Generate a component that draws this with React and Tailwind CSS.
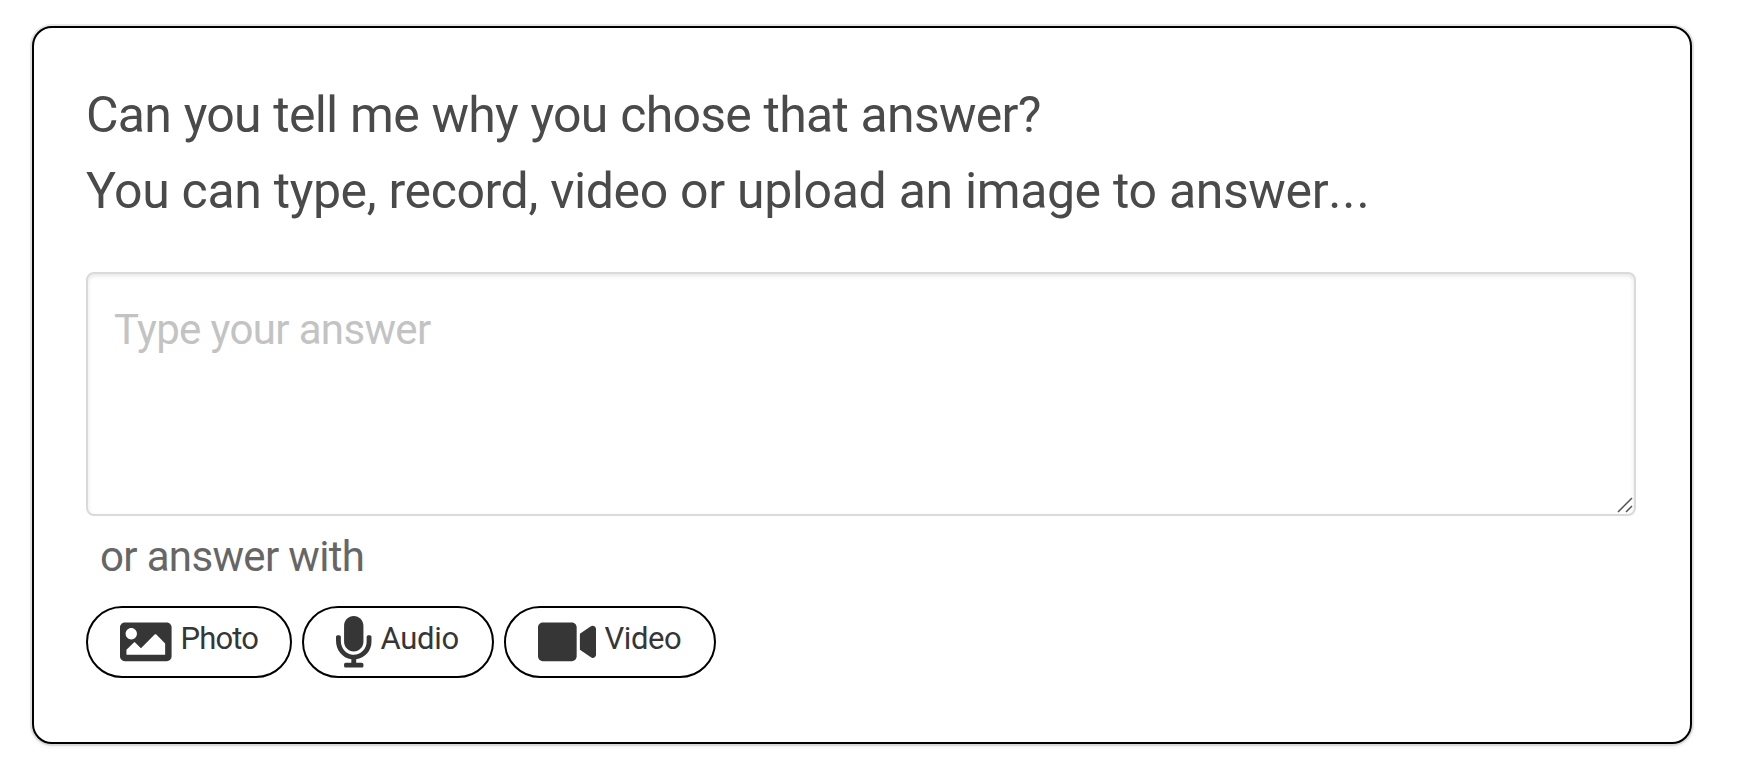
import React from 'react'
import { FaImage, FaMicrophone, FaVideo } from 'react-icons/fa'

const options = [
  { name: 'Photo', icon: FaImage, button: 'w-[206px]', svg: 'w-[51.6px]', text: 'ml-[9px] tracking-[-0.9px]' },
  { name: 'Audio', icon: FaMicrophone, button: 'w-[192px]', svg: 'w-[35.5px]', text: 'ml-[9px] tracking-[-0.3px]' },
  { name: 'Video', icon: FaVideo, button: 'w-[212px]', svg: 'w-[58px]', text: 'ml-[8.5px] tracking-[-0.4px]' }
]

export default function App() {
  return (
    <div className="h-[784px] bg-white pt-[26px] pl-8 font-['Roboto',sans-serif]">
      <div className="w-[1660px] h-[718px] rounded-[20px] border-2 border-black bg-white pt-[49px] px-[52px] shadow-[0_2px_4px_rgba(34,36,38,0.12),0_0_0_2px_rgba(34,36,38,0.1)]">
        <h2 className="text-[50px] leading-[76px] text-[#4a4a4a] font-normal whitespace-nowrap">
          <span className="block tracking-[-0.75px] [word-spacing:0.9px]">Can you tell me why you chose that answer?</span>
          <span className="block tracking-[-0.4px] [word-spacing:0.3px]">
            You can type, record, video or upload an image to answer<span className="tracking-[1px]">...</span>
          </span>
        </h2>

        <div className="relative mt-[43px] w-[1550px] h-[244px]">
          <textarea
            className="block w-full h-full resize-none outline-none rounded-lg border-2 border-[#dadada] bg-white px-[26px] pt-[28px] text-[42px] leading-[56px] tracking-[-0.64px] text-[#4a4a4a] placeholder:text-[#c3c3c3] shadow-[inset_0_2px_4px_rgba(0,0,0,0.1)]"
            placeholder="Type your answer"
          />
          <svg className="absolute right-[3px] bottom-[3px] w-4 h-4" viewBox="0 0 16 16" stroke="#555" strokeWidth="1.5">
            <path d="M1 15L15 1M9 15L15 9" />
          </svg>
        </div>

        <p className="mt-[13px] pl-[14px] text-[42px] leading-[56px] tracking-[-0.65px] text-[#666]">or answer with</p>

        <div className="mt-[21px] flex gap-[10px]">
          {options.map(({ name, icon: Icon, button, svg, text }) => (
            <button key={name} className={`${button} h-[72px] flex items-center rounded-full border-2 border-black bg-white pl-8 text-[#363636]`}>
              <Icon className={`${svg} h-[51.6px] shrink-0`} />
              <span className={`${text} text-[31px] leading-none -mt-[7px]`}>{name}</span>
            </button>
          ))}
        </div>
      </div>
    </div>
  )
}
